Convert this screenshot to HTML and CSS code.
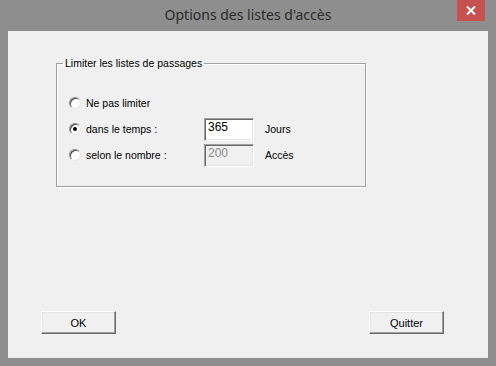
FILE: index.html
```html
<!DOCTYPE html>
<html lang="fr">
<head>
<meta charset="utf-8">
<title>Options des listes d'accès</title>
<link rel="stylesheet" href="styles.css">
</head>
<body>
<div class="window">
  <div class="titlebar">
    <span class="spacer"></span>
    <span class="title">Options des listes d'accès</span>
    <span class="controls">
      <span class="close" aria-label="Fermer">
        <svg width="10" height="9" viewBox="0 0 10 9"><path d="M1 0.5 L9 8.5 M9 0.5 L1 8.5" stroke="#fff" stroke-width="2" fill="none"/></svg>
      </span>
    </span>
  </div>
  <div class="client">
    <fieldset class="group">
      <legend class="legend">Limiter les listes de passages</legend>
      <div class="rows">
        <label class="opt"><span class="radio"></span><span>Ne pas limiter</span></label>
        <span></span><span></span>
        <label class="opt"><span class="radio checked"></span><span>dans le temps :</span></label>
        <span class="field">365</span>
        <span class="unit">Jours</span>
        <label class="opt"><span class="radio"></span><span>selon le nombre :</span></label>
        <span class="field disabled">200</span>
        <span class="unit">Accès</span>
      </div>
    </fieldset>
    <div class="footer">
      <button class="btn">OK</button>
      <button class="btn">Quitter</button>
    </div>
  </div>
</div>
</body>
</html>
```
FILE: styles.css
```css
* { box-sizing: border-box; }
html, body { margin: 0; padding: 0; }
body { background: #8e8e8e; }
.window {
  width: 496px;
  height: 366px;
  background: #8e8e8e;
  display: flex;
  flex-direction: column;
  padding: 0 8px 8px 8px;
}
.titlebar {
  height: 31px;
  display: grid;
  grid-template-columns: 1fr auto 1fr;
  align-items: start;
}
.title {
  font-family: "Noto Sans", "Open Sans", sans-serif;
  font-size: 14px;
  color: #2b2b2b;
  line-height: 30px;
}
.controls { display: flex; justify-content: flex-end; margin-right: 3px; }
.close {
  width: 28px;
  height: 21px;
  background: #c75050;
  display: flex;
  align-items: center;
  justify-content: center;
}
.client {
  flex: 1;
  background: #f0f0f0;
  display: flex;
  flex-direction: column;
  padding: 25px 0 24px 48px;
  font-family: "Liberation Sans", Arial, sans-serif;
  font-size: 10.5px;
  color: #000;
}
.group {
  width: 310px;
  margin: 0;
  padding: 20px 0 18px 12px;
  border: 1px solid #a0a0a0;
  box-shadow: inset 1px 1px 0 #fff, 1px 1px 0 #fff;
}
.legend {
  padding: 0 2px;
  margin-left: -6px;
  line-height: 14px;
}
.rows {
  display: grid;
  grid-template-columns: 124px 50px auto;
  grid-auto-rows: 26px;
  align-items: center;
  column-gap: 11px;
}
.opt {
  display: flex;
  align-items: center;
  gap: 5px;
}
.radio {
  width: 12px;
  height: 12px;
  border-radius: 50%;
  background: #fff;
  border: 1px solid;
  border-color: #8a8a8a #e6e6e6 #e6e6e6 #8a8a8a;
  box-shadow: inset 1px 1px 0 #505050;
  display: flex;
  align-items: center;
  justify-content: center;
}
.radio.checked::after {
  content: "";
  width: 4px;
  height: 4px;
  border-radius: 50%;
  background: #000;
}
.field {
  width: 50px;
  height: 23px;
  background: #fff;
  border: 1px solid;
  border-color: #a0a0a0 #fff #fff #a0a0a0;
  box-shadow: inset 1px 1px 0 #696969, inset -1px -1px 0 #e3e3e3;
  padding: 1px 0 0 3px;
  font-size: 12px;
  line-height: 14px;
}
.field.disabled { background: #f0f0f0; color: #8c8c8c; }
.footer {
  margin-top: auto;
  display: flex;
  justify-content: space-between;
  padding: 0 44px 0 0;
  margin-left: -15px;
}
.btn {
  width: 75px;
  height: 23px;
  font-family: "Liberation Sans", Arial, sans-serif;
  font-size: 11px;
  color: #000;
  background: #f0f0f0;
  border: 1px solid;
  border-color: #fff #696969 #696969 #fff;
  box-shadow: inset -1px -1px 0 #a0a0a0, inset 1px 1px 0 #e3e3e3;
  padding: 0;
}
```
